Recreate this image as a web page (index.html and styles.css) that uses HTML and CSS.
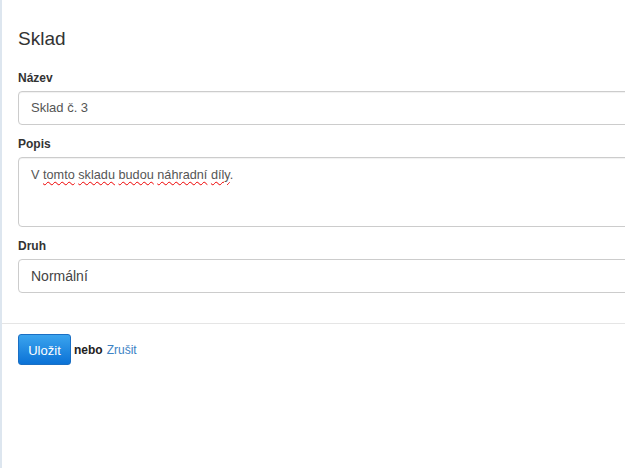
FILE: index.html
```html
<!DOCTYPE html>
<html lang="cs">
<head>
<meta charset="utf-8">
<title>Sklad</title>
<link rel="stylesheet" href="styles.css">
</head>
<body>
<div class="page">
  <form class="form">
    <h2 class="title">Sklad</h2>
    <div class="field">
      <label class="label">Název</label>
      <div class="input">Sklad č. 3</div>
    </div>
    <div class="field">
      <label class="label">Popis</label>
      <div class="input textarea">V <span class="sp">tomto</span> <span class="sp">skladu</span> <span class="sp">budou</span> <span class="sp">náhradní</span> <span class="sp">díly</span>.</div>
    </div>
    <div class="field">
      <label class="label">Druh</label>
      <div class="input select">Normální</div>
    </div>
  </form>
  <div class="actions">
    <button type="button" class="btn">Uložit</button>
    <span class="or">nebo</span>
    <a class="link" href="#">Zrušit</a>
  </div>
</div>
</body>
</html>
```
FILE: styles.css
```css
html, body {
  margin: 0;
  padding: 0;
  background: #fff;
  overflow: hidden;
}
body {
  font-family: "Liberation Sans", Arial, sans-serif;
  color: #333;
  width: 625px;
  height: 468px;
  border-left: 2px solid #dde6ef;
  box-sizing: border-box;
}
.page {
  padding-top: 28px;
}
.form {
  padding: 0 0 0 16px;
}
.title {
  margin: 0 0 21px;
  font-size: 19px;
  font-weight: normal;
  line-height: 22px;
  color: #333;
}
.field {
  display: flex;
  flex-direction: column;
  margin-bottom: 12px;
}
.label {
  font-size: 12px;
  font-weight: bold;
  line-height: 15px;
  margin-bottom: 5px;
  color: #333;
}
.input {
  width: 660px;
  height: 34px;
  box-sizing: border-box;
  border: 1px solid #ccc;
  border-radius: 4px;
  padding: 0 12px;
  font-size: 13px;
  line-height: 32px;
  color: #555;
  box-shadow: inset 0 1px 1px rgba(0,0,0,0.06);
}
.textarea {
  height: 70px;
  line-height: 18px;
  padding-top: 8px;
  font-size: 12.7px;
}
.sp {
  text-decoration: underline wavy #e00;
  text-decoration-thickness: 1px;
  text-underline-offset: 2px;
}
.select {
  font-size: 14px;
  color: #444;
  box-shadow: none;
}
.actions {
  margin-top: 30px;
  border-top: 1px solid #e5e5e5;
  padding: 10px 0 0 16px;
  display: flex;
  align-items: center;
  gap: 3px;
  font-size: 12px;
}
.btn {
  height: 31px;
  width: 53px;
  border: 1px solid #1a6fc4;
  border-radius: 3px;
  background: linear-gradient(#3ba4ee, #0b72d6);
  color: #fff;
  font-family: "Liberation Sans", Arial, sans-serif;
  font-size: 13px;
  padding: 2px 0 0;
  cursor: pointer;
}
.or {
  font-weight: bold;
  color: #222;
}
.link {
  color: #3c82c4;
  text-decoration: none;
  margin-left: 1px;
}
```
